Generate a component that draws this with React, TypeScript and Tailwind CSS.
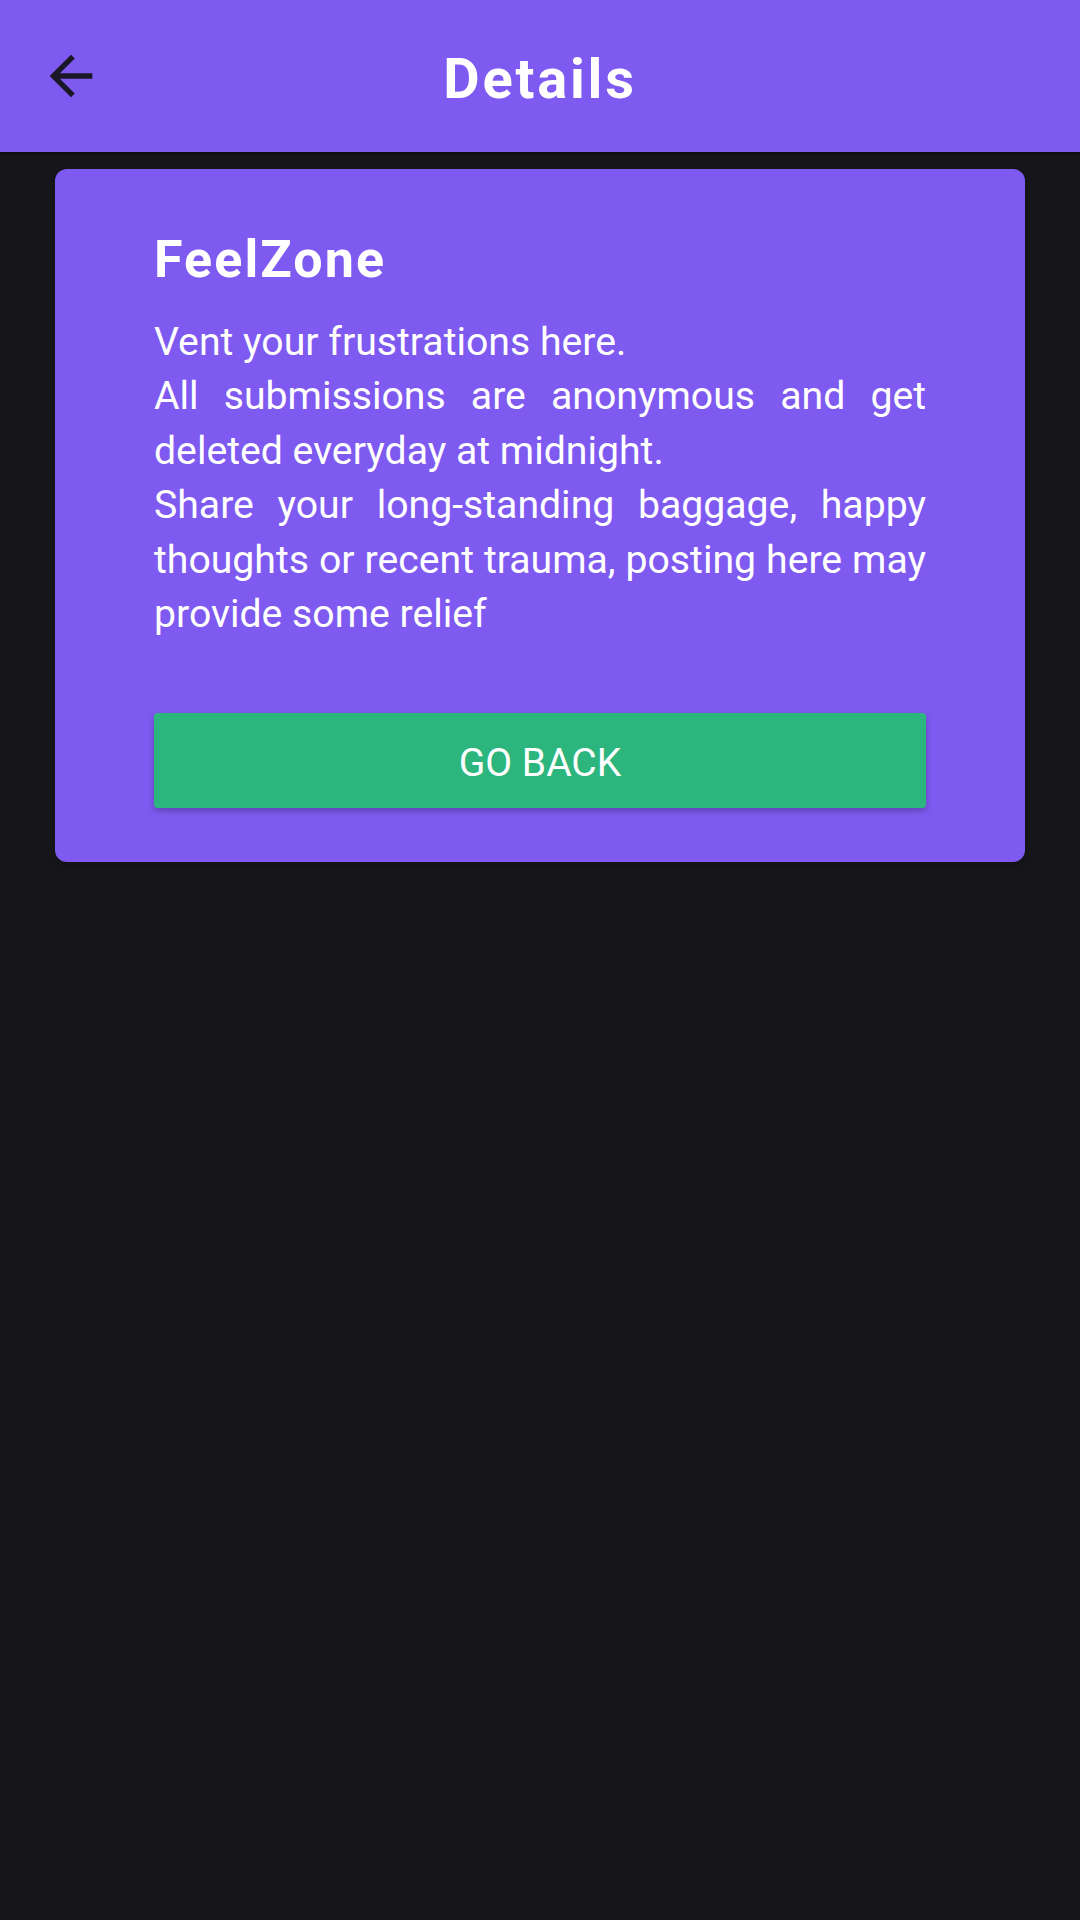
import React from 'react';

const BackArrow: React.FC = () => (
  <svg width="64" height="64" viewBox="0 0 24 24" fill="#1a1726">
    <path d="M20 11H7.83l5.59-5.59L12 4l-8 8 8 8 1.41-1.41L7.83 13H20v-2z" />
  </svg>
);

const App: React.FC = () => {
  return (
    <div
      className="min-h-[1920px] bg-[#16161a] text-white"
      style={{ fontFamily: 'Roboto, "Liberation Sans", sans-serif' }}
    >
      {/* Header */}
      <div className="relative h-[152px] bg-[#7f5af0] flex items-center justify-center pt-[5px] shadow-[0_2px_4px_rgba(0,0,0,0.5)]">
        <button className="absolute left-[39px] top-[44px]">
          <BackArrow />
        </button>
        <h1 className="text-[56px] font-bold tracking-wider leading-none">Details</h1>
      </div>

      {/* Card */}
      <div className="px-[55px] pt-[17px]">
        <div className="bg-[#7f5af0] rounded-[12px] px-[99px] pt-[60px] pb-[54px] shadow-md">
          <h2 className="text-[52px] font-bold tracking-[0.04em] leading-[61px]">FeelZone</h2>
          <p className="mt-[25px] text-[39.2px] leading-[54.4px] text-justify">
            Vent your frustrations here.
            <br />
            All submissions are anonymous and get deleted everyday at midnight.
            <br />
            Share your long-standing baggage, happy thoughts or recent trauma, posting here may provide some relief
          </p>
          <button className="mt-[72px] w-full h-[95px] bg-[#2cb67d] rounded-[4px] text-[39px] uppercase pt-[4px] shadow-[0_3px_6px_rgba(0,0,0,0.25)]">
            Go Back
          </button>
        </div>
      </div>
    </div>
  );
};

export default App;
